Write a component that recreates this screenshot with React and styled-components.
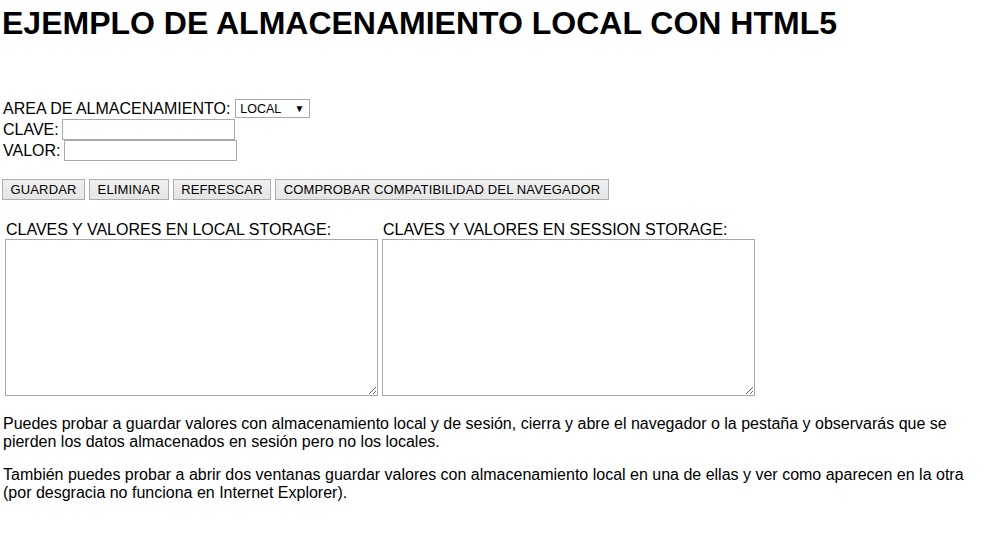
import React, { useState } from "react";
import styled, { createGlobalStyle } from "styled-components";

const GlobalStyle = createGlobalStyle`
body{
margin:0;
background:#fff;
color:#000;
font-family:"Liberation Sans", Arial, sans-serif;
font-size:16px;
}
`;

const Page = styled.div`
padding:0 2px;
`;

const Title = styled.h1`
margin:5px 0 0;
font-size:32px;
line-height:37px;
font-weight:bold;
`;

const Form = styled.div`
margin-top:56px;
display:flex;
flex-direction:column;
`;

const Row = styled.div`
display:flex;
align-items:center;
height:21px;
padding-left:1px;
`;

const Label = styled.span`
margin-right:3px;
`;

const Input = styled.input`
box-sizing:border-box;
width:173px;
height:21px;
border:1px solid #a9a9a9;
padding:1px 2px;
font-family:"Liberation Sans", Arial, sans-serif;
font-size:13px;
outline:none;
`;

const SelectBox = styled.span`
position:relative;
display:inline-flex;
align-items:center;
box-sizing:border-box;
width:75px;
height:19px;
margin-left:2px;
border:1px solid #a9a9a9;
background:#fff;
`;

const Select = styled.select`
appearance:none;
border:none;
background:transparent;
width:100%;
height:100%;
padding:0 0 0 4px;
font-family:"Liberation Sans", Arial, sans-serif;
font-size:12.5px;
color:#000;
outline:none;
`;

const Arrow = styled.span`
position:absolute;
right:5px;
top:3px;
font-size:10px;
pointer-events:none;
`;

const ButtonRow = styled.div`
margin-top:18px;
display:flex;
gap:4px;
`;

const Button = styled.button`
box-sizing:border-box;
height:21px;
padding:0 7.5px;
border:1px solid #adadad;
border-radius:0;
background:linear-gradient(#f0f0f0,#e5e5e5);
font-family:"Liberation Sans", Arial, sans-serif;
font-size:13px;
letter-spacing:0.15px;
color:#000;
cursor:pointer;

:hover{
background:#e5f1fb;
border-color:#0078d7;
}
`;

const Storage = styled.div`
margin-top:21px;
padding-left:3px;
display:grid;
grid-template-columns:373px 373px;
column-gap:4px;
`;

const Column = styled.div`
display:flex;
flex-direction:column;
`;

const StorageLabel = styled.span`
line-height:18px;
padding-left:1px;
`;

const Area = styled.textarea`
box-sizing:border-box;
width:373px;
height:157px;
margin:0;
border:1px solid #a9a9a9;
font-family:"Liberation Mono", monospace;
font-size:13px;
outline:none;
`;

const Text = styled.p`
margin:0 0 16px;
padding-left:1px;
line-height:17.5px;
`;

const Notes = styled.div`
margin-top:19px;
`;

function App() {
const [area, setArea] = useState("local");

return (
<Page>
<GlobalStyle />

<Title>EJEMPLO DE ALMACENAMIENTO LOCAL CON HTML5</Title>

<Form>
<Row>
<Label>AREA DE ALMACENAMIENTO:</Label>
<SelectBox>
<Select value={area} onChange={(e) => setArea(e.target.value)}>
<option value="local">LOCAL</option>
<option value="session">SESSION</option>
</Select>
<Arrow>▼</Arrow>
</SelectBox>
</Row>
<Row>
<Label>CLAVE:</Label>
<Input type="text" />
</Row>
<Row>
<Label>VALOR:</Label>
<Input type="text" />
</Row>
</Form>

<ButtonRow>
<Button>GUARDAR</Button>
<Button>ELIMINAR</Button>
<Button>REFRESCAR</Button>
<Button>COMPROBAR COMPATIBILIDAD DEL NAVEGADOR</Button>
</ButtonRow>

<Storage>
<Column>
<StorageLabel>CLAVES Y VALORES EN LOCAL STORAGE:</StorageLabel>
<Area readOnly />
</Column>
<Column>
<StorageLabel>CLAVES Y VALORES EN SESSION STORAGE:</StorageLabel>
<Area readOnly />
</Column>
</Storage>

<Notes>
<Text>
Puedes probar a guardar valores con almacenamiento local y de sesión, cierra y abre el navegador o la pestaña y observarás que se pierden los datos almacenados en sesión pero no los locales.
</Text>
<Text>
También puedes probar a abrir dos ventanas guardar valores con almacenamiento local en una de ellas y ver como aparecen en la otra (por desgracia no funciona en Internet Explorer).
</Text>
</Notes>
</Page>
);
}

export default App;
